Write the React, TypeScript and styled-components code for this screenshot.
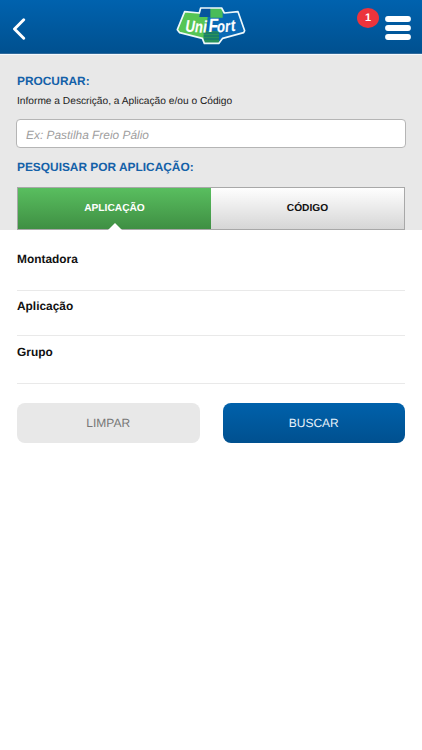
import React, { useState } from "react";
import styled, { createGlobalStyle, css } from "styled-components";

const GlobalStyle = createGlobalStyle`
  * { box-sizing: border-box; }
  body {
    margin: 0;
    background: #fff;
    color: #111;
    font-family: "Liberation Sans", Arial, sans-serif;
    text-rendering: geometricPrecision;
  }
  button { font-family: inherit; cursor: pointer; text-rendering: inherit; }
  input { text-rendering: inherit; }
`;

const Screen = styled.div`
  min-height: 750px;
  background: #fff;
`;

const Header = styled.header`
  height: 55px;
  display: grid;
  grid-template-columns: 1fr 82px 1fr;
  background: linear-gradient(#0062ae, #00508f);
  border-bottom: 1px solid #f4f9fd;
  box-shadow: inset 0 -1px 0 #2f6a9c;
`;

const IconButton = styled.button`
  display: block;
  padding: 0;
  border: 0;
  background: none;
  line-height: 0;
`;

const BackButton = styled(IconButton)`
  margin: 18px 0 0 12px;
  justify-self: start;
  align-self: start;
`;

const HeaderActions = styled.div`
  display: flex;
  justify-content: flex-end;
  align-items: flex-start;
  gap: 5px;
  padding-right: 10px;
`;

const Badge = styled.span`
  width: 22px;
  height: 20px;
  margin-top: 8px;
  border-radius: 50%;
  background: #ec343c;
  color: #fff;
  font-size: 11px;
  font-weight: 700;
  line-height: 20px;
  text-align: center;
`;

const MenuButton = styled(IconButton)`
  margin-top: 15px;
`;

const SearchPanel = styled.section`
  height: 175px;
  padding: 0 17px;
  background: #e8e8e8;
  display: flex;
  flex-direction: column;
`;

const Title = styled.h2<{ $top: number }>`
  margin: ${(p) => p.$top}px 0 0;
  color: #1461a8;
  font-size: 11.9px;
  line-height: 14px;
  white-space: nowrap;
`;

const Hint = styled.p`
  margin: 7px 0 0;
  color: #222;
  font-size: 10.2px;
  line-height: 14px;
`;

const SearchInput = styled.input`
  height: 29px;
  margin: 10px -1px 0;
  padding: 3px 9px 0;
  border: 1px solid #b5b5b5;
  border-radius: 4px;
  background: #fff;
  font: italic 11.9px "Liberation Sans", Arial, sans-serif;
  outline: none;
  &::placeholder { color: #a0a0a0; opacity: 1; }
`;

const Tabs = styled.div`
  display: grid;
  grid-template-columns: 1fr 1fr;
  height: 43px;
  margin-top: 13px;
  border: 1px solid #a8a8a8;
`;

const Tab = styled.button<{ $active: boolean }>`
  position: relative;
  padding: 0;
  border: 0;
  background: linear-gradient(#fefefe, #d6d6d6);
  color: #111;
  font-size: 10.2px;
  font-weight: 700;
  ${(p) =>
    p.$active &&
    css`
      background: linear-gradient(#59be5f, #3f8f43);
      color: #fff;
      &::after {
        content: "";
        position: absolute;
        left: calc(50% - 7px);
        bottom: -1px;
        border: 7px solid transparent;
        border-top: 0;
        border-bottom: 7px solid #fff;
      }
    `}
`;

const Filters = styled.div`
  padding: 0 17px;
`;

const FilterRow = styled.div<{ $height: number; $top: number }>`
  height: ${(p) => p.$height}px;
  padding-top: ${(p) => p.$top}px;
  border-bottom: 1px solid #e9e9e9;
  color: #111;
  font-size: 11.9px;
  font-weight: 700;
  line-height: 14px;
`;

const Actions = styled.div`
  display: grid;
  grid-template-columns: 1fr 1fr;
  gap: 23px;
  padding: 19px 17px 0;
`;

const ActionButton = styled.button<{ $primary?: boolean }>`
  height: 40px;
  padding: 0;
  border: 0;
  border-radius: 8px;
  background: ${(p) => (p.$primary ? "linear-gradient(#0061ab, #00508f)" : "#e8e8e8")};
  color: ${(p) => (p.$primary ? "#e8f2fa" : "#777")};
  font-size: 12px;
`;

function Logo() {
  return (
    <svg width="82" height="52" viewBox="0 0 246 156" aria-label="UniFort">
      <defs>
        <clipPath id="shield">
          <path d="M44 35 L88 39 L92 24 H155 L163 39 L204 35 L224 92 L221 98 L158 115 L147 130 H103 L97 115 L29 98 L22 89 Z" />
        </clipPath>
      </defs>
      <g clipPath="url(#shield)">
        <rect width="246" height="156" fill="#0869b5" />
        <path d="M18 28 H116 L103 130 H18 Z" fill="#56c554" />
        <path d="M92 22 H128 V51 H88 Z" fill="#07549d" />
        <path d="M121 22 H158 V53 H121 Z" fill="#49bc59" />
        <path d="M101 94 H147 V130 H101 Z" fill="#29925a" />
        <path d="M101 99 H147 M101 108 H147 M101 117 H147" stroke="#0c6b79" strokeWidth="3" />
      </g>
      <path
        d="M44 35 L88 39 L92 24 H155 L163 39 L204 35 L224 92 L221 98 L158 115 L147 130 H103 L97 115 L29 98 L22 89 Z"
        fill="none"
        stroke="#eef8fb"
        strokeWidth="5"
        strokeLinejoin="round"
      />
      <g transform="translate(11 0) scale(.8 1) skewX(-8)">
        <text
          x="55 91 122 142 174 205 227"
          y="94 96 97 97 97 96 94"
          rotate="5 4 3 0 0 -3 -5"
          fill="#fff"
          stroke="#fff"
          strokeWidth="0.5"
          fontFamily="Liberation Sans, Arial, sans-serif"
          fontWeight="700"
          fontSize="49"
        >
          Uni<tspan fontSize="58">F</tspan>ort
        </text>
      </g>
    </svg>
  );
}

const filters = [
  { label: "Montadora", height: 61, top: 22 },
  { label: "Aplicação", height: 45, top: 8 },
  { label: "Grupo", height: 48, top: 9 },
];

export default function App() {
  const [tab, setTab] = useState("APLICAÇÃO");
  return (
    <Screen>
      <GlobalStyle />
      <Header>
        <BackButton aria-label="Voltar">
          <svg width="14" height="22" viewBox="0 0 14 22">
            <path d="M11.7 1.7 L2.5 11 L11.7 20.3" fill="none" stroke="#fff" strokeWidth="2.9" strokeLinecap="round" strokeLinejoin="round" />
          </svg>
        </BackButton>
        <Logo />
        <HeaderActions>
          <Badge>1</Badge>
          <MenuButton aria-label="Menu">
            <svg width="28" height="27" viewBox="0 0 28 27">
              <path d="M4 4 H24 M4 13 H24 M4 22 H24" stroke="#fff" strokeWidth="5.8" strokeLinecap="round" />
            </svg>
          </MenuButton>
        </HeaderActions>
      </Header>
      <SearchPanel>
        <Title $top={19}>PROCURAR:</Title>
        <Hint>Informe a Descrição, a Aplicação e/ou o Código</Hint>
        <SearchInput placeholder="Ex: Pastilha Freio Pálio" />
        <Title $top={12}>PESQUISAR POR APLICAÇÃO:</Title>
        <Tabs>
          {["APLICAÇÃO", "CÓDIGO"].map((name) => (
            <Tab key={name} $active={tab === name} onClick={() => setTab(name)}>
              {name}
            </Tab>
          ))}
        </Tabs>
      </SearchPanel>
      <Filters>
        {filters.map((f) => (
          <FilterRow key={f.label} $height={f.height} $top={f.top}>
            {f.label}
          </FilterRow>
        ))}
      </Filters>
      <Actions>
        <ActionButton>LIMPAR</ActionButton>
        <ActionButton $primary>BUSCAR</ActionButton>
      </Actions>
    </Screen>
  );
}
